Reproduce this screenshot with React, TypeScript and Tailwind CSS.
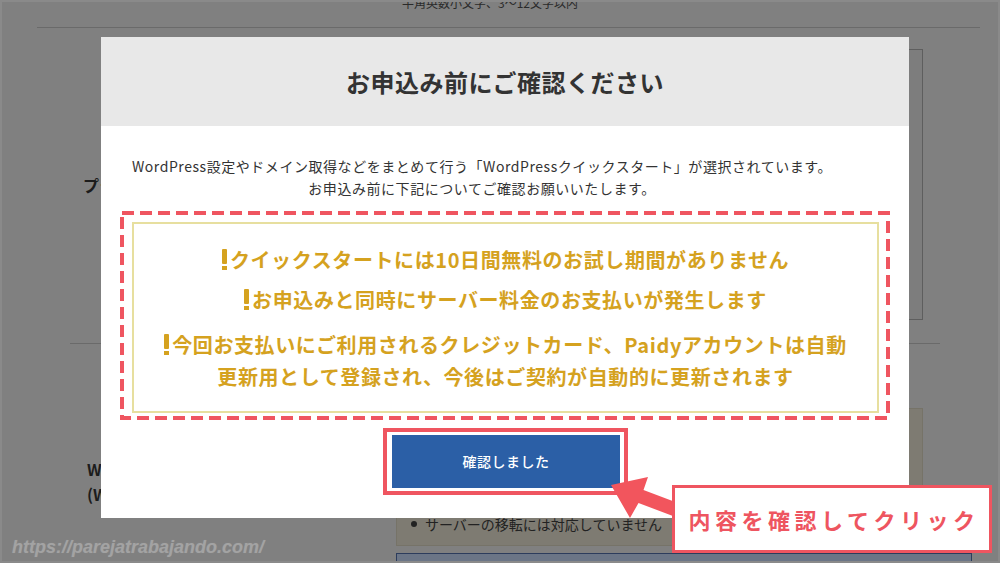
import React from "react";

const JP = { fontFamily: '"Noto Sans CJK JP", "Noto Sans", sans-serif' };

function BackgroundPage() {
  return (
    <div className="flex flex-col text-[#1c1c1c]" style={JP}>
      <p className="-mt-[4px] pr-[20px] text-center text-[12px] leading-[14px] text-[#2a2a2a]">
        半角英数小文字、3～12文字以内
      </p>
      <div className="mt-[17px] ml-[37px] mr-[20px] h-px bg-[#6a6a6a]" />
      <div className="mt-[21px] flex items-center">
        <span className="pl-[83px] text-[16px] font-bold">プラン</span>
        <div className="ml-auto mr-[77px] h-[271px] w-[600px] border border-[#5e5e5e] bg-[#7d7d7d]" />
      </div>
      <div className="mt-[23px] ml-[70px] mr-[60px] h-px bg-[#6a6a6a]" />
      <div className="mt-[64px] flex">
        <div className="mt-[49px] pl-[87px] text-[16px] font-bold leading-[25px]">
          <p>WordPressクイックスタート</p>
          <p>(WordPress簡単インストール)</p>
        </div>
        <div className="ml-auto mr-[28px] flex w-[576px] flex-col">
          <div className="mr-[49px] flex h-[138px] flex-col justify-end border border-[#767368] bg-[#7e7b72] pb-[10px] pl-[14px]">
            <p className="flex items-center gap-[8px] text-[14px] leading-[22px] text-[#222]">
              <span className="h-[6px] w-[6px] rounded-full bg-[#222]" />
              サーバーの移転には対応していません
            </p>
          </div>
          <div className="mt-[7px] h-[40px] border border-[#2c3c5c] bg-[#6b7586]" />
        </div>
      </div>
    </div>
  );
}

function DashedBox({ children }: { children: React.ReactNode }) {
  return (
    <div className="relative mx-[19px] mt-[12px] h-[209px] pt-[11px] pl-[12px] pr-[11px] pb-[7px]">
      <svg className="pointer-events-none absolute inset-0" width="770" height="209">
        <rect
          x="2"
          y="2"
          width="766"
          height="205"
          fill="none"
          stroke="#ef5560"
          strokeWidth="4"
          strokeDasharray="12 6"
        />
      </svg>
      {children}
    </div>
  );
}

function Bang() {
  return (
    <span className="mr-[3px] inline-flex -translate-y-[5px] flex-col items-center align-[-1px]">
      <span className="h-[15px] w-[5px] rounded-[1px] bg-[#d5a21f]" />
      <span className="mt-[2px] h-[4px] w-[5px] bg-[#d5a21f]" />
    </span>
  );
}

function Warn({ children }: { children: React.ReactNode }) {
  return (
    <span>
      <Bang />
      {children}
    </span>
  );
}

function Modal() {
  return (
    <div className="absolute left-[101px] top-[37px] h-[481px] w-[808px] bg-white" style={JP}>
      <div className="flex h-[89px] items-center justify-center bg-[#e8e8e8]">
        <h1 className="text-[24px] font-bold tracking-[0.5px] text-[#333]">お申込み前にご確認ください</h1>
      </div>
      <div className="pt-[29px] pr-[46px] text-center text-[14px] leading-[22px] tracking-[0.55px] text-[#333]">
        <p>WordPress設定やドメイン取得などをまとめて行う「WordPressクイックスタート」が選択されています。</p>
        <p>お申込み前に下記についてご確認お願いいたします。</p>
      </div>
      <DashedBox>
        <div className="flex h-full flex-col items-center border-2 border-[#e7df9f] pt-[20px] text-[20px] font-bold leading-[32px] tracking-[0.6px] text-[#d5a21f]">
          <p>
            <Warn>クイックスタートには10日間無料のお試し期間がありません</Warn>
          </p>
          <p className="mt-[8px]">
            <Warn>お申込みと同時にサーバー料金のお支払いが発生します</Warn>
          </p>
          <p className="mt-[13px] text-center">
            <Warn>今回お支払いにご利用されるクレジットカード、Paidyアカウントは自動</Warn>
            <br />
            更新用として登録され、今後はご契約が自動的に更新されます
          </p>
        </div>
      </DashedBox>
      <div className="mt-[15px] flex justify-center pl-[2px]">
        <div className="relative">
          <div className="pointer-events-none absolute -left-[9px] -top-[7px] -right-[8px] -bottom-[7px] border-[4px] border-[#ef5560]" />
          <button className="flex h-[53px] w-[228px] items-center justify-center bg-[#2b5fa6] text-[14px] font-medium tracking-[0.5px] text-white">
            確認しました
          </button>
        </div>
      </div>
    </div>
  );
}

export default function App() {
  return (
    <div className="relative h-[563px] w-[1000px] overflow-hidden bg-[#808080]">
      <BackgroundPage />
      <Modal />
      <svg className="pointer-events-none absolute inset-0" width="1000" height="563">
        <polygon
          points="611,485 648,477 643.5,490 707,514 702,527 638.5,503 630,518"
          fill="#f2555d"
        />
      </svg>
      <div className="absolute left-[672px] top-[485px] flex h-[68px] w-[320px] items-center justify-center border-[3px] border-[#ef5560] bg-white" style={JP}>
        <span className="pl-[4px] text-[22px] font-bold tracking-[4.5px] text-[#ee5560]">内容を確認してクリック</span>
      </div>
      <div
        className="absolute left-[12px] top-[534px] text-[18px] font-bold italic text-[#a3a3a3]"
        style={{ fontFamily: '"Liberation Sans", sans-serif', textShadow: "0 0 1px #8f8f8f" }}
      >
        https://parejatrabajando.com/
      </div>
      <div className="pointer-events-none absolute inset-0 border-2 border-[#8a8a8a]" />
    </div>
  );
}
